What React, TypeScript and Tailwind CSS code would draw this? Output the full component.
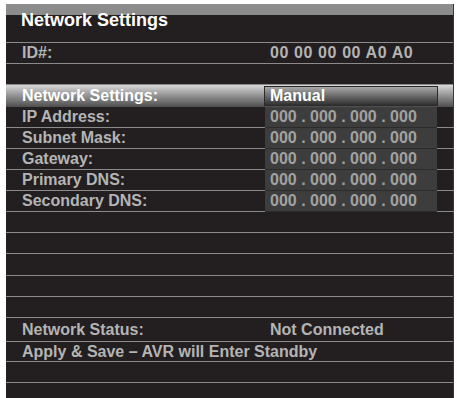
const font = { fontFamily: '"Liberation Sans", Arial, sans-serif' };

type Row = {
  h: string;
  label?: string;
  value?: string;
  box?: boolean;
  wide?: boolean;
};

const rows: Row[] = [
  { h: "h-[21px]", label: "ID#:", value: "00 00 00 00 A0 A0", wide: true },
  { h: "h-[21px]" },
  { h: "h-[22px]", label: "Network Settings:", value: "Manual" },
  { h: "h-[21px]", label: "IP Address:", value: "000 . 000 . 000 . 000", box: true },
  { h: "h-[21px]", label: "Subnet Mask:", value: "000 . 000 . 000 . 000", box: true },
  { h: "h-[21px]", label: "Gateway:", value: "000 . 000 . 000 . 000", box: true },
  { h: "h-[21px]", label: "Primary DNS:", value: "000 . 000 . 000 . 000", box: true },
  { h: "h-[21px]", label: "Secondary DNS:", value: "000 . 000 . 000 . 000", box: true },
  { h: "h-[21px]" },
  { h: "h-[21px]" },
  { h: "h-[22px]" },
  { h: "h-[21px]" },
  { h: "h-[21px]" },
  { h: "h-[24px]", label: "Network Status:", value: "Not Connected" },
  { h: "h-[20px]", label: "Apply & Save – AVR will Enter Standby" },
  { h: "h-[21px]" },
];

const txt = "text-[16px] leading-[18px] font-bold";

function SettingRow({ row }: { row: Row }) {
  if (row.value === "Manual") {
    return (
      <div className={`${row.h} grid grid-cols-[258px_174px_16px] items-center bg-[linear-gradient(to_bottom,#d8d8d8,#979797_45%,#4e4e4e)]`}>
        <div className={`pl-4 ${txt} text-white`}>{row.label}</div>
        <div className={`flex h-[20px] items-center border border-[#2a2a2a] bg-[linear-gradient(to_bottom,#a9a9a9,#6a6a6a_50%,#303030)] pl-[5px] ${txt} text-white`}>
          {row.value}
        </div>
        <div />
      </div>
    );
  }
  if (row.box) {
    return (
      <div className={`${row.h} grid grid-cols-[259px_172px_17px]`}>
        <div className={`flex items-center border-b border-[#8a8a8a] pl-4 ${txt} text-[#b4b4b4]`}>
          {row.label}
        </div>
        <div className={`flex items-center whitespace-nowrap border-b border-[#2c2c2c] bg-[#3d3d3d] pl-[5px] ${txt} text-[#a2a2a2]`}>
          {row.value}
        </div>
        <div className="border-b border-[#8a8a8a]" />
      </div>
    );
  }
  return (
    <div className={`${row.h} grid grid-cols-[258px_1fr] items-center border-b border-[#8a8a8a] ${txt} text-[#b4b4b4]`}>
      <div className={row.value ? "pl-4" : "col-span-2 pl-4 whitespace-nowrap"}>{row.label}</div>
      {row.value && (
        <div className={`pl-[6px] whitespace-nowrap ${row.wide ? "tracking-[0.6px]" : ""}`}>{row.value}</div>
      )}
    </div>
  );
}

export default function App() {
  return (
    <div className="h-[398px] w-[457px] overflow-hidden bg-white pl-[6px] pt-[4px]" style={font}>
      <div className="flex h-[394px] w-[448px] flex-col border-r border-[#3a3738] bg-[#231f20]">
        <div className="h-[39px] shrink-0 border-b border-[#8a8a8a] bg-[linear-gradient(to_bottom,#8c8c8c_0,#8c8c8c_11px,#231f20_11px)] pl-[15px] pt-[5px] text-[18px] leading-[22px] font-bold text-white">
          Network Settings
        </div>
        {rows.map((r, i) => (
          <SettingRow key={i} row={r} />
        ))}
        <div className="flex-1" />
      </div>
    </div>
  );
}
